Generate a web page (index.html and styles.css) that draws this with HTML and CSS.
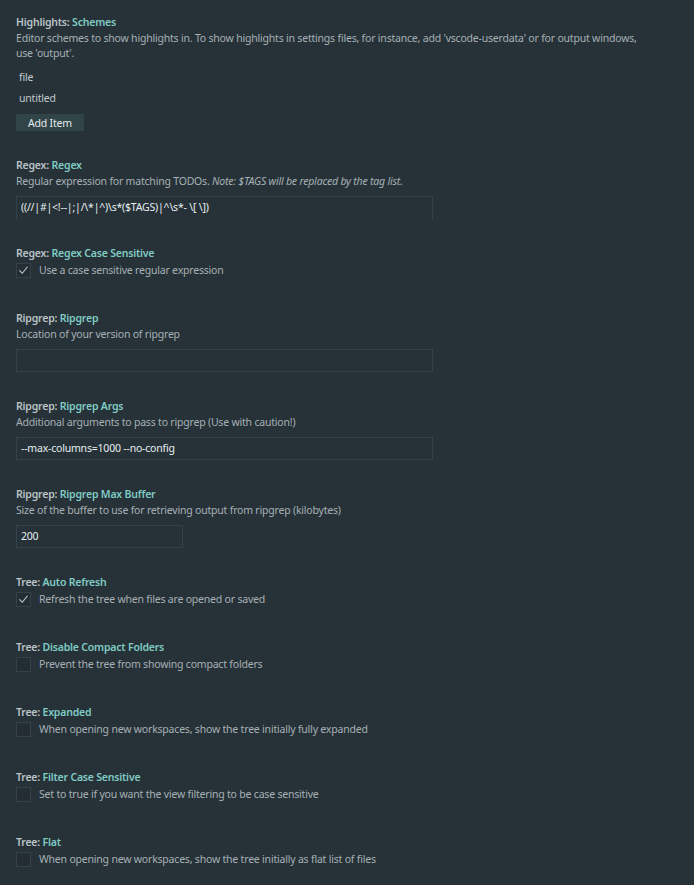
FILE: index.html
```html
<!DOCTYPE html>
<html>
	<head>
		<meta charset="UTF-8">
		<title>Settings</title>
		<link rel="stylesheet" href="styles.css">
	</head>
	<body>
		<div class="settings">
			<div class="setting">
				<div class="title"><span class="cat">Highlights: </span><span class="name">Schemes</span></div>
				<div class="desc">Editor schemes to show highlights in. To show highlights in settings files, for instance, add 'vscode-userdata' or for output windows, use 'output'.</div>
				<ul class="list">
					<li>file</li>
					<li>untitled</li>
				</ul>
				<button class="btn">Add Item</button>
			</div>
			<div class="setting">
				<div class="title"><span class="cat">Regex: </span><span class="name">Regex</span></div>
				<div class="desc">Regular expression for matching TODOs. <em>Note: $TAGS will be replaced by the tag list.</em></div>
				<div class="input open">((//|#|&lt;!--|;|/\*|^)\s*($TAGS)|^\s*- \[ \])</div>
			</div>
			<div class="setting check">
				<div class="title"><span class="cat">Regex: </span><span class="name">Regex Case Sensitive</span></div>
				<label class="row"><span class="box"><svg viewBox="0 0 16 16" width="14" height="14"><polyline points="3,8.5 6.5,12 13,4" fill="none" stroke="#c5cdd1" stroke-width="1.3"/></svg></span>Use a case sensitive regular expression</label>
			</div>
			<div class="setting">
				<div class="title"><span class="cat">Ripgrep: </span><span class="name">Ripgrep</span></div>
				<div class="desc">Location of your version of ripgrep</div>
				<div class="input"></div>
			</div>
			<div class="setting">
				<div class="title"><span class="cat">Ripgrep: </span><span class="name">Ripgrep Args</span></div>
				<div class="desc">Additional arguments to pass to ripgrep (Use with caution!)</div>
				<div class="input">--max-columns=1000 --no-config</div>
			</div>
			<div class="setting">
				<div class="title"><span class="cat">Ripgrep: </span><span class="name">Ripgrep Max Buffer</span></div>
				<div class="desc">Size of the buffer to use for retrieving output from ripgrep (kilobytes)</div>
				<div class="input small">200</div>
			</div>
			<div class="setting check">
				<div class="title"><span class="cat">Tree: </span><span class="name">Auto Refresh</span></div>
				<label class="row"><span class="box"><svg viewBox="0 0 16 16" width="14" height="14"><polyline points="3,8.5 6.5,12 13,4" fill="none" stroke="#c5cdd1" stroke-width="1.3"/></svg></span>Refresh the tree when files are opened or saved</label>
			</div>
			<div class="setting check">
				<div class="title"><span class="cat">Tree: </span><span class="name">Disable Compact Folders</span></div>
				<label class="row"><span class="box"></span>Prevent the tree from showing compact folders</label>
			</div>
			<div class="setting check">
				<div class="title"><span class="cat">Tree: </span><span class="name">Expanded</span></div>
				<label class="row"><span class="box"></span>When opening new workspaces, show the tree initially fully expanded</label>
			</div>
			<div class="setting check">
				<div class="title"><span class="cat">Tree: </span><span class="name">Filter Case Sensitive</span></div>
				<label class="row"><span class="box"></span>Set to true if you want the view filtering to be case sensitive</label>
			</div>
			<div class="setting check">
				<div class="title"><span class="cat">Tree: </span><span class="name">Flat</span></div>
				<label class="row"><span class="box"></span>When opening new workspaces, show the tree initially as flat list of files</label>
			</div>
		</div>
	</body>
</html>
```

FILE: styles.css
```css
*{ margin: 0; padding: 0; box-sizing: border-box;}
html, body{ background: #263238;}
body{ font-family: "Noto Sans", "Open Sans", sans-serif; font-size: 10.5px; letter-spacing: -0.2px; color: #a7b0b5; height: 885px; overflow: hidden;}
.settings{ padding: 13px 16px 0 16px;}
.setting{ padding-bottom: 25px;}
.setting.check{ padding-bottom: 31px;}
.title{ line-height: 18px; font-weight: 600;}
.title .cat{ color: #bcc3c7;}
.title .name{ color: #80cbc4;}
.desc{ line-height: 15px; padding-right: 34px;}
.desc em{ font-style: italic;}
.list{ list-style: none; margin-top: 6px;}
.list li{ height: 21px; line-height: 21px; padding-left: 3px; color: #c3cace;}
.btn{ display: block; margin-top: 5px; height: 17px; padding: 0 12px; border: none; background: #314549; color: #e4eaec; font-family: inherit; font-size: 10.5px; letter-spacing: -0.2px;}
.input{ width: 417px; height: 23px; margin-top: 7px; border: 1px solid #33424a; padding: 0 4px; line-height: 21px; color: #e6eef0;}
.input.open{ border-bottom: none;}
.input.small{ width: 167px;}
.row{ display: flex; align-items: center; height: 16px; color: #a7b0b5;}
.box{ width: 15px; height: 15px; margin-right: 8px; border: 1px solid #33424a; background: #232d32; display: flex; align-items: center; justify-content: center;}
```
